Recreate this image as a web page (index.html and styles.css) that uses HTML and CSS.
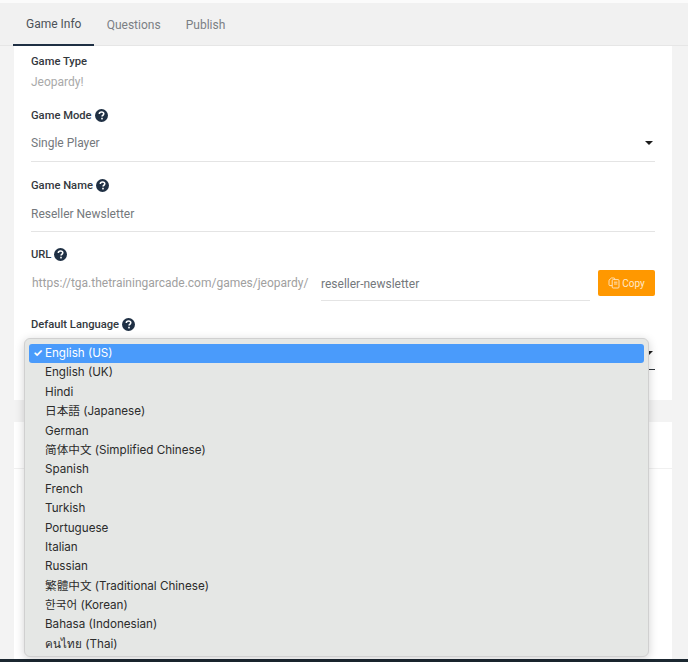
FILE: index.html
```html
<!DOCTYPE html>
<html lang="en">
<head>
    <meta charset="UTF-8">
    <meta name="viewport" content="width=device-width, initial-scale=1.0">
    <title>Game Info</title>
    <link rel="stylesheet" href="styles.css">
</head>
<body>
    <div class="page">
        <nav class="tabs">
            <a class="tab active">Game Info</a>
            <a class="tab">Questions</a>
            <a class="tab">Publish</a>
        </nav>

        <main class="card">
            <div class="field field-type">
                <div class="label">Game Type</div>
                <div class="static-value">Jeopardy!</div>
            </div>

            <div class="field field-mode">
                <div class="label">Game Mode
                    <svg class="help" viewBox="0 0 16 16"><use href="#help-icon"></use></svg>
                </div>
                <div class="input select-input">
                    <span>Single Player</span>
                    <span class="caret"></span>
                </div>
            </div>

            <div class="field field-name">
                <div class="label">Game Name
                    <svg class="help" viewBox="0 0 16 16"><use href="#help-icon"></use></svg>
                </div>
                <div class="input">Reseller Newsletter</div>
            </div>

            <div class="field field-url">
                <div class="label">URL
                    <svg class="help" viewBox="0 0 16 16"><use href="#help-icon"></use></svg>
                </div>
                <div class="url-row">
                    <span class="url-prefix">https://tga.thetrainingarcade.com/games/jeopardy/</span>
                    <div class="input slug-input">reseller-newsletter</div>
                    <button class="btn-copy">
                        <svg width="12" height="12" viewBox="0 0 12 12" fill="none" stroke="currentColor" stroke-width="0.9">
                            <rect x="4.2" y="2.6" width="6.8" height="8.4" rx="1"></rect>
                            <path d="M4.2 8.6H2a1 1 0 0 1-1-1V3.2L3.4 1h2.4a1 1 0 0 1 1 1v.6"></path>
                            <path d="M6 5.2h3.4M6 7h3.4"></path>
                        </svg>
                        Copy
                    </button>
                </div>
            </div>

            <div class="field field-lang">
                <div class="label">Default Language
                    <svg class="help" viewBox="0 0 16 16"><use href="#help-icon"></use></svg>
                </div>
                <div class="input select-input lang-input">
                    <span></span>
                    <span class="caret"></span>
                </div>
            </div>
        </main>

        <section class="card card-lower">
            <div class="lower-head"></div>
        </section>

        <div class="taskbar"></div>

        <ul class="menu">
            <li class="selected"><span class="check">✓</span>English (US)</li>
            <li>English (UK)</li>
            <li>Hindi</li>
            <li>日本語 (Japanese)</li>
            <li>German</li>
            <li>简体中文 (Simplified Chinese)</li>
            <li>Spanish</li>
            <li>French</li>
            <li>Turkish</li>
            <li>Portuguese</li>
            <li>Italian</li>
            <li>Russian</li>
            <li>繁體中文 (Traditional Chinese)</li>
            <li>한국어 (Korean)</li>
            <li>Bahasa (Indonesian)</li>
            <li>คนไทย (Thai)</li>
        </ul>
    </div>

    <svg width="0" height="0" class="defs">
        <symbol id="help-icon" viewBox="0 0 16 16">
            <circle cx="8" cy="8" r="8" fill="#1f3044"></circle>
            <path d="M5.3 6.2c0-1.500 1.100-2.500 2.800-2.500 1.600 0 2.700.9 2.700 2.200 0 1.100-.7 1.600-1.400 2.100-.5.35-.7.6-.7 1.300" fill="none" stroke="#fff" stroke-width="1.900"></path>
            <rect x="7.600" y="10.800" width="2" height="2" fill="#fff"></rect>
        </symbol>
    </svg>
</body>
</html>
```

FILE: styles.css
```css
* {
    box-sizing: border-box;
    margin: 0;
    padding: 0;
}

body {
    font-family: 'Roboto', 'Noto Sans CJK JP', sans-serif;
    background: #f3f3f3;
    color: #2e3338;
}

.defs {
    position: absolute;
}

.page {
    position: relative;
    height: 662px;
    overflow: hidden;
    display: flex;
    flex-direction: column;
    border-top: 3px solid #fbfbfb;
}

.tabs {
    display: flex;
    height: 43px;
    padding-left: 13.400px;
    background: #f1f1f1;
    border-bottom: 1px solid #e6e6e6;
}

.tab {
    display: flex;
    align-items: center;
    height: 43px;
    padding: 0 12.600px;
    font-size: 12px;
    color: #7b7f84;
}

.tab.active {
    color: #4c5258;
    border-bottom: 2px solid #1f3044;
}

.card {
    width: 658px;
    margin-left: 14px;
    background: #fff;
    padding: 0 17px;
    height: 354px;
    flex-shrink: 0;
}

.label {
    display: flex;
    align-items: center;
    gap: 3px;
    height: 14px;
    font-size: 11.200px;
    font-weight: 500;
    color: #33383d;
}

.help {
    width: 13px;
    height: 13px;
}

.static-value {
    margin-top: 7px;
    font-size: 12px;
    color: #a9a9a9;
}

.input {
    display: flex;
    align-items: center;
    font-size: 12px;
    color: #74787c;
    border-bottom: 1px solid #e4e4e4;
}

.select-input {
    justify-content: space-between;
}

.caret {
    width: 0;
    height: 0;
    margin-right: 2px;
    border-left: 4px solid transparent;
    border-right: 4px solid transparent;
    border-top: 4px solid #1c1c1c;
}

.field-type {
    padding-top: 8px;
}

.field-mode {
    margin-top: 19px;
}

.field-mode .input {
    height: 40px;
    padding-top: 3px;
}

.field-name {
    margin-top: 16px;
}

.field-name .input {
    height: 40px;
    padding-top: 5px;
}

.field-url {
    margin-top: 15px;
}

.url-row {
    display: flex;
    align-items: center;
    margin-top: 8px;
}

.url-prefix {
    width: 290px;
    margin-bottom: 4px;
    padding-left: 1px;
    font-size: 12px;
    white-space: nowrap;
    color: #a0a0a0;
}

.slug-input {
    width: 269px;
    height: 32px;
    padding-bottom: 2px;
}

.btn-copy {
    display: flex;
    align-items: center;
    justify-content: center;
    gap: 2px;
    width: 57px;
    height: 26px;
    margin-left: 8px;
    margin-bottom: 4px;
    border: none;
    border-radius: 2px;
    background: #ff9800;
    color: #ffe9cc;
    font-family: inherit;
    font-size: 10px;
}

.field-lang {
    margin-top: 16px;
}

.lang-input {
    height: 39px;
    padding-top: 5px;
    border-bottom-color: #30363c;
}

.card-lower {
    margin-top: 22px;
    flex: 1;
    height: auto;
    padding: 0;
}

.lower-head {
    height: 47px;
    border-bottom: 1px solid #f0f0f0;
}

.taskbar {
    height: 3px;
    flex-shrink: 0;
    background: #1b2730;
}

.menu {
    position: absolute;
    left: 24px;
    top: 335px;
    width: 625px;
    height: 319px;
    padding: 5px 4px;
    list-style: none;
    background: #e5e7e5;
    border: 1px solid #d0d0d0;
    border-radius: 6px;
    box-shadow: 0 2px 10px rgba(0, 0, 0, 0.18);
    font-family: 'Inter', 'Noto Sans CJK JP', sans-serif;
    font-size: 11.650px;
    color: #2c2c2c;
}

.menu li {
    position: relative;
    height: 19.400px;
    line-height: 19px;
    padding-left: 16px;
    white-space: nowrap;
}

.menu li.selected {
    background: #4a9bfb;
    color: #fff;
    border-radius: 3px;
}

.check {
    position: absolute;
    left: 4px;
    font-size: 11px;
    font-weight: 700;
}
```
